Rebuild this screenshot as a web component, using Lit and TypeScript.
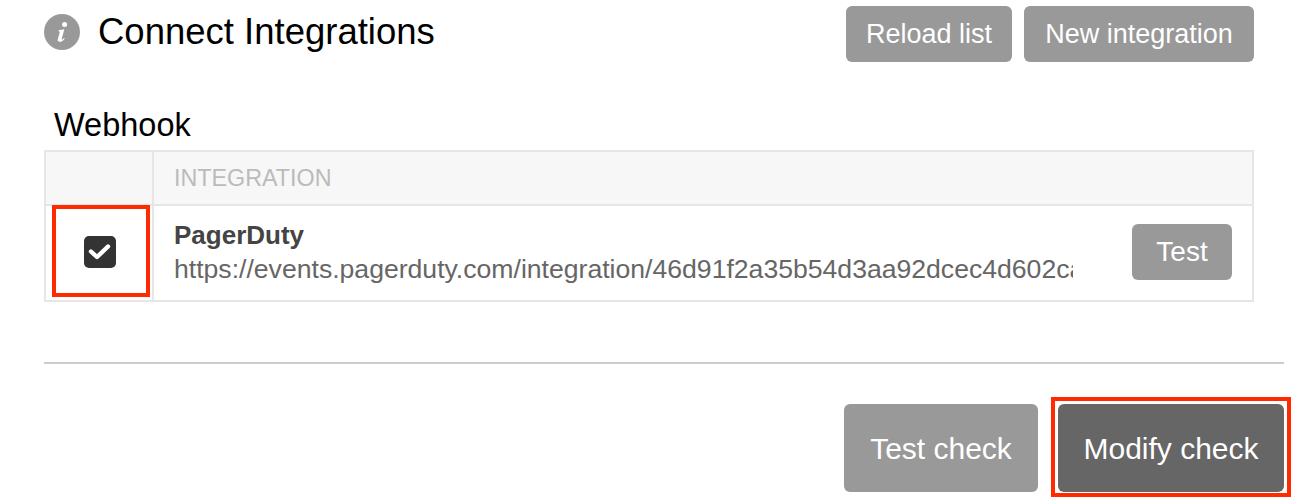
import { LitElement, html, css } from "lit";
import { customElement } from "lit/decorators.js";

@customElement("app-root")
export class AppRoot extends LitElement {
  static styles = css`
    :host {
      display: block;
      width: 1300px;
      height: 500px;
      overflow: hidden;
      background: #fff;
      font-family: "Liberation Sans", Arial, sans-serif;
      color: #000;
    }
    .page {
      display: flex;
      flex-direction: column;
      box-sizing: border-box;
      height: 500px;
      padding: 6px 16px 0 44px;
    }
    .head {
      display: flex;
      align-items: flex-start;
      padding-right: 30px;
    }
    .info {
      width: 36px;
      height: 36px;
      margin-top: 8px;
      flex: none;
    }
    h2 {
      margin: 0 0 0 18px;
      flex: 1;
      font-size: 36.5px;
      font-weight: 400;
      line-height: 52px;
    }
    .actions {
      display: flex;
      gap: 12px;
    }
    .btn {
      display: flex;
      align-items: center;
      justify-content: center;
      box-sizing: border-box;
      border-radius: 6px;
      background: #999;
      color: #fff;
      font-size: 27px;
      white-space: nowrap;
    }
    .reload { width: 166px; height: 56px; }
    .new { width: 230px; height: 56px; }
    .label {
      margin: 44px 0 0 10px;
      font-size: 32.5px;
      line-height: 38px;
      height: 44px;
    }
    .table {
      width: 1210px;
      box-sizing: border-box;
      border: 2px solid #e6e6e6;
      display: grid;
      grid-template-columns: 106px 1fr;
    }
    .th {
      box-sizing: border-box;
      background: #f7f7f7;
      border-bottom: 2px solid #e6e6e6;
      height: 54px;
    }
    .th.name {
      border-left: 2px solid #e6e6e6;
      padding-left: 20px;
      color: #bbb;
      font-size: 23.3px;
      line-height: 53px;
    }
    .check-cell {
      position: relative;
      height: 94px;
      display: flex;
      align-items: flex-start;
      justify-content: center;
      padding: 30px 0 0 2px;
      box-sizing: border-box;
    }
    .mark {
      position: absolute;
      box-sizing: border-box;
      border: 4px solid #ff2a00;
      pointer-events: none;
    }
    .cell-mark {
      left: 6px;
      top: -1px;
      width: 98px;
      height: 92px;
    }
    .box {
      width: 32px;
      height: 32px;
      display: block;
    }
    .row {
      border-left: 2px solid #e6e6e6;
      display: flex;
      align-items: flex-start;
      padding: 13px 20px 0 20px;
      min-width: 0;
    }
    .info-col {
      width: 899px;
      overflow: hidden;
      white-space: nowrap;
    }
    .title {
      font-size: 26px;
      font-weight: 700;
      line-height: 32px;
      color: #444;
    }
    .url {
      font-size: 26.6px;
      line-height: 36px;
      color: #666;
    }
    .test {
      width: 100px;
      height: 56px;
      margin-left: auto;
      margin-top: 5px;
      font-size: 28px;
    }
    hr {
      width: 1240px;
      margin: 60px 0 0 0;
      border: 0;
      height: 2px;
      background: #ccc;
    }
    .foot {
      display: flex;
      justify-content: flex-end;
      gap: 20px;
      width: 1240px;
      margin-top: 40px;
    }
    .test-check { width: 194px; height: 88px; font-size: 30px; padding-top: 2px; }
    .wrap { position: relative; }
    .modify {
      width: 226px;
      height: 88px;
      background: #666;
      font-size: 30px;
      padding-top: 2px;
    }
    .btn-mark {
      left: -7px;
      top: -7px;
      width: 240px;
      height: 100px;
    }
  `;

  render() {
    return html`
      <div class="page">
        <div class="head">
          <svg class="info" viewBox="0 0 36 36" aria-hidden="true">
            <circle cx="18" cy="18" r="18" fill="#999"></circle>
            <circle cx="20.6" cy="10.6" r="2.5" fill="#fff"></circle>
            <path d="M14.6 16.2l5.8-1-2.7 9.6c-.2.8.5 1 1.1.4l1.3-1.3.6.5c-1.4 2.2-3.1 3.4-4.9 3.4-1.7 0-2.4-1-2-2.5l1.9-6.8c.2-.9-.3-1.2-1.2-1.2z" fill="#fff"></path>
          </svg>
          <h2>Connect Integrations</h2>
          <div class="actions">
            <div class="btn reload">Reload list</div>
            <div class="btn new">New integration</div>
          </div>
        </div>
        <div class="label">Webhook</div>
        <div class="table">
          <div class="th"></div>
          <div class="th name">INTEGRATION</div>
          <div class="check-cell">
            <svg class="box" viewBox="0 0 32 32" aria-hidden="true">
              <rect width="32" height="32" rx="5" fill="#333"></rect>
              <path d="M7 15.5l6 5.5L24 10.5" fill="none" stroke="#fff" stroke-width="4.4" stroke-linejoin="round" stroke-linecap="round"></path>
            </svg>
            <div class="mark cell-mark"></div>
          </div>
          <div class="row">
            <div class="info-col">
              <div class="title">PagerDuty</div>
              <div class="url">https://events.pagerduty.com/integration/46d91f2a35b54d3aa92dcec4d602ca</div>
            </div>
            <div class="btn test">Test</div>
          </div>
        </div>
        <hr />
        <div class="foot">
          <div class="btn test-check">Test check</div>
          <div class="wrap">
            <div class="btn modify">Modify check</div>
            <div class="mark btn-mark"></div>
          </div>
        </div>
      </div>
    `;
  }
}
